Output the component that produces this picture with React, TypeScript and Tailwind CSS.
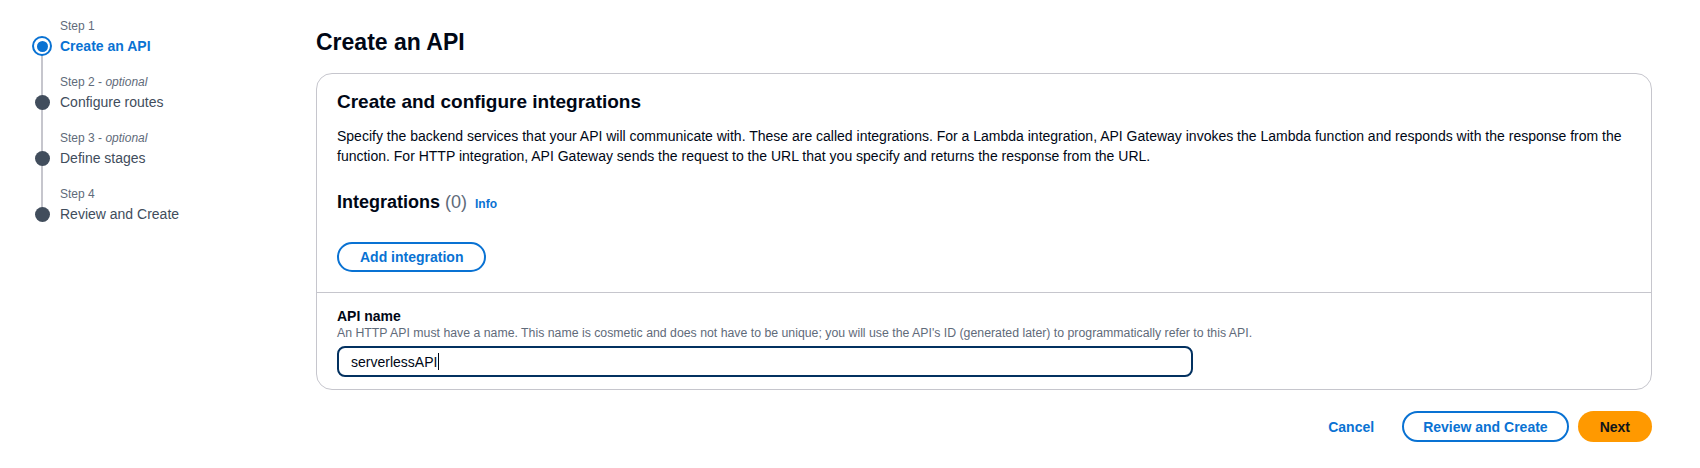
import React from 'react'

const steps = [
  { step: 'Step 1', optional: false, label: 'Create an API', active: true },
  { step: 'Step 2', optional: true, label: 'Configure routes', active: false },
  { step: 'Step 3', optional: true, label: 'Define stages', active: false },
  { step: 'Step 4', optional: false, label: 'Review and Create', active: false },
]

const Line = () => <div className="mx-auto h-full w-[2px] bg-[#c6c6cd]" />

const Steps = () => {
  return (
    <nav className="w-[316px] shrink-0 pl-[32px] pt-[18px]">
      {steps.map((s, i) => {
        const first = i === 0
        const last = i === steps.length - 1
        return (
          <div key={s.step} className="grid grid-cols-[20px_1fr] grid-rows-[18px_20px_18px] gap-x-2">
            <div>{!first && <Line />}</div>
            <div className="text-xs leading-4 text-[#5f6b7a]">
              {s.step}
              {s.optional && (
                <>
                  {' - '}
                  <i>optional</i>
                </>
              )}
            </div>
            <div className="relative flex items-center justify-center">
              {!first && <div className="absolute left-[9px] top-0 h-1/2 w-[2px] bg-[#c6c6cd]" />}
              {!last && <div className="absolute left-[9px] bottom-0 h-1/2 w-[2px] bg-[#c6c6cd]" />}
              {s.active ? (
                <span className="relative flex h-[20px] w-[20px] items-center justify-center rounded-full border-[2.5px] border-[#0972d3] bg-white">
                  <span className="h-[11px] w-[11px] rounded-full bg-[#0972d3]" />
                </span>
              ) : (
                <span className="relative h-[15px] w-[15px] rounded-full bg-[#414d5c]" />
              )}
            </div>
            <div className={s.active ? 'text-sm font-bold leading-5 text-[#0972d3]' : 'text-sm leading-5 text-[#414d5c]'}>
              {s.label}
            </div>
            <div>{!last && <Line />}</div>
            <div />
          </div>
        )
      })}
    </nav>
  )
}

const App = () => {
  return (
    <div className="flex min-h-[468px] bg-white font-['Liberation_Sans',Arial,sans-serif] text-[#000716]">
      <Steps />
      <main className="flex-1 pr-[48px] pt-[27px]">
        <h1 className="text-[23px] font-bold leading-[30px]">Create an API</h1>

        <section className="mt-[16px] rounded-2xl border border-[#c6c6cd]">
          <div className="px-5 pt-[16px] pb-[20px]">
            <h2 className="text-[19px] font-bold leading-6">Create and configure integrations</h2>
            <p className="mt-3 text-sm leading-5">
              Specify the backend services that your API will communicate with. These are called integrations. For a Lambda
              integration, API Gateway invokes the Lambda function and responds with the response from the function. For HTTP
              integration, API Gateway sends the request to the URL that you specify and returns the response from the URL.
            </p>
            <div className="mt-6 flex items-baseline gap-2">
              <h3 className="text-lg font-bold leading-6">
                Integrations <span className="font-normal text-[#5f6b7a]">(0)</span>
              </h3>
              <a className="text-xs font-bold text-[#0972d3]" href="#">
                Info
              </a>
            </div>
            <button className="mt-[28px] h-[30px] rounded-full border-2 border-[#0972d3] px-[21px] text-sm font-bold text-[#0972d3]">
              Add integration
            </button>
          </div>

          <div className="border-t border-[#c6c6cd] px-5 pt-[14px] pb-[12px]">
            <div className="text-sm font-bold leading-[18px]">API name</div>
            <div className="text-[12.3px] leading-4 text-[#5f6b7a]">
              An HTTP API must have a name. This name is cosmetic and does not have to be unique; you will use the API's ID
              (generated later) to programmatically refer to this API.
            </div>
            <div className="mt-[5px] flex h-[31px] w-[856px] items-center rounded-lg border-2 border-[#033160] px-3 text-sm">
              serverlessAPI
              <span className="ml-px h-[17px] w-px bg-[#000716]" />
            </div>
          </div>
        </section>

        <div className="mt-[21px] flex items-center justify-end">
          <button className="mr-2 h-[31px] px-5 text-sm font-bold text-[#0972d3]">Cancel</button>
          <button className="mr-[9px] h-[31px] rounded-full border-2 border-[#0972d3] px-[19px] text-sm font-bold text-[#0972d3]">
            Review and Create
          </button>
          <button className="h-[31px] rounded-full bg-[#ff9900] px-[22px] text-sm font-bold text-[#0f141a]">Next</button>
        </div>
      </main>
    </div>
  )
}

export default App
